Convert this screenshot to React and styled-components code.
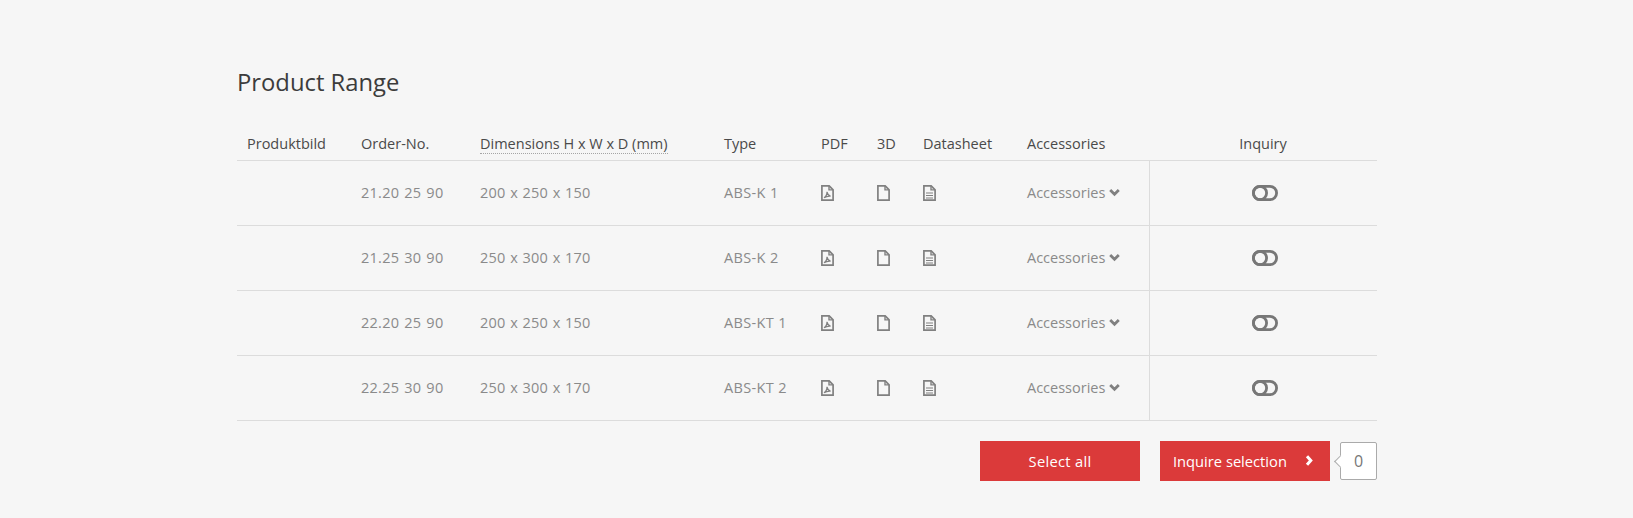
import React from 'react';
import styled, { createGlobalStyle } from 'styled-components';

const GlobalStyle = createGlobalStyle`
  html, body {
    margin: 0;
    padding: 0;
    background: #f6f6f6;
    font-family: "Open Sans", "Noto Sans", sans-serif;
  }
`;

const Page = styled.main`
  width: 1140px;
  margin: 0 0 0 237px;
  padding-top: 66px;
  height: 518px;
  box-sizing: border-box;
  overflow: hidden;
`;

const Title = styled.h2`
  margin: 0 0 29px;
  height: 34px;
  line-height: 32px;
  font-size: 23.8px;
  font-weight: 400;
  color: #3c3c3c;
`;

const Table = styled.table`
  width: 1140px;
  table-layout: fixed;
  border-collapse: collapse;
  font-size: 14.5px;
`;

const HeadCell = styled.th`
  height: 31px;
  padding: 0 0 2px ${(p) => (p.$center ? 0 : 10)}px;
  box-sizing: border-box;
  font-weight: 400;
  color: #4a4a4a;
  text-align: ${(p) => (p.$center ? 'center' : 'left')};
  border-bottom: 1px solid #dcdcdc;
  white-space: nowrap;
`;

const Dotted = styled.span`
  border-bottom: 1px dotted #a5a5a5;
`;

const Cell = styled.td`
  height: 65px;
  padding: 0 0 0 10px;
  box-sizing: border-box;
  color: #8a8a8a;
  border-bottom: 1px solid #dcdcdc;
  white-space: nowrap;
`;

const NumberCell = styled(Cell)`
  letter-spacing: 0.25px;
  word-spacing: ${(p) => (p.$tight ? 0.5 : 1)}px;
`;

const TypeCell = styled(Cell)`
  letter-spacing: 0.35px;
`;

const InquiryCell = styled(Cell)`
  padding: 0 0 0 4px;
  text-align: center;
  border-left: 1px solid #dcdcdc;
`;

const IconWrap = styled.span`
  display: inline-flex;
  vertical-align: middle;
  margin-top: -3px;
`;

const AccessoriesLink = styled.span`
  display: inline-flex;
  align-items: center;
  gap: 4px;
`;

const Actions = styled.div`
  display: flex;
  align-items: center;
  justify-content: flex-end;
  margin-top: 20px;
`;

const RedButton = styled.button`
  display: flex;
  align-items: center;
  justify-content: ${(p) => (p.$between ? 'space-between' : 'center')};
  width: ${(p) => p.$width}px;
  height: 40px;
  padding: 0 ${(p) => (p.$between ? 16 : 13)}px 0 13px;
  margin-right: ${(p) => p.$gap}px;
  box-sizing: border-box;
  border: none;
  background: #db3a3a;
  color: #fff;
  font-family: inherit;
  font-size: 14.7px;
  letter-spacing: ${(p) => (p.$between ? 0 : 0.3)}px;
`;

const Count = styled.div`
  position: relative;
  width: 37px;
  height: 38px;
  box-sizing: border-box;
  display: flex;
  align-items: center;
  justify-content: center;
  background: #fff;
  border: 1px solid #aaa;
  border-radius: 2px;
  color: #777;
  font-size: 16px;

  &::before {
    content: '';
    position: absolute;
    left: -5px;
    top: 14px;
    width: 8px;
    height: 8px;
    background: #fff;
    border-left: 1px solid #aaa;
    border-bottom: 1px solid #aaa;
    transform: rotate(45deg);
  }
`;

const PdfIcon = () => (
  <svg width="13" height="16" viewBox="0 0 13 16" fill="none" stroke="#808080" strokeWidth="1.7">
    <path d="M.9.9h7.3l3.9 3.9v10.3H.9z" />
    <path d="M8 .9v4h4" strokeWidth="1.4" />
    <path d="M3 12.8c2-1.2 3-4 3-6 .4 2.2 1.4 3.6 3.6 4.4-2.4-.2-4.6.3-6.6 1.6z" strokeWidth="1.2" />
  </svg>
);

const FileIcon = () => (
  <svg width="13" height="16" viewBox="0 0 13 16" fill="none" stroke="#808080" strokeWidth="1.7">
    <path d="M.9.9h7.3l3.9 3.9v10.3H.9z" />
    <path d="M8 .9v4h4" strokeWidth="1.4" />
  </svg>
);

const TextFileIcon = () => (
  <svg width="13" height="16" viewBox="0 0 13 16" fill="none" stroke="#808080" strokeWidth="1.7">
    <path d="M.9.9h7.3l3.9 3.9v10.3H.9z" />
    <path d="M8 .9v4h4" strokeWidth="1.4" />
    <path d="M3 8h7M3 10.5h7M3 13h7" strokeWidth="1.2" />
  </svg>
);

const Chevron = () => (
  <svg width="11" height="9" viewBox="0 0 11 9" fill="none" stroke="#808080" strokeWidth="2.8">
    <path d="M1.2 2l4.3 4.3L9.8 2" />
  </svg>
);

const ChevronRight = () => (
  <svg width="9" height="11" viewBox="0 0 9 11" fill="none" stroke="#fff" strokeWidth="3">
    <path d="M2 1.2l3.8 4.3L2 9.8" />
  </svg>
);

const ToggleIcon = () => (
  <svg width="26" height="16" viewBox="0 0 26 16" fill="none" stroke="#777" strokeWidth="2.8">
    <rect x="1.4" y="1.4" width="23.2" height="13.2" rx="6.6" />
    <circle cx="8" cy="8" r="6.6" />
  </svg>
);

const rows = [
  ['21.20 25 90', '200 x 250 x 150', 'ABS-K 1'],
  ['21.25 30 90', '250 x 300 x 170', 'ABS-K 2'],
  ['22.20 25 90', '200 x 250 x 150', 'ABS-KT 1'],
  ['22.25 30 90', '250 x 300 x 170', 'ABS-KT 2'],
];

const colWidths = [114, 119, 244, 97, 56, 46, 104, 132, 228];

const App = () => (
  <Page>
    <GlobalStyle />
    <Title>Product Range</Title>
    <Table>
      <colgroup>
        {colWidths.map((w, i) => (
          <col key={i} width={w} />
        ))}
      </colgroup>
      <thead>
        <tr>
          <HeadCell>Produktbild</HeadCell>
          <HeadCell>Order-No.</HeadCell>
          <HeadCell>
            <Dotted>Dimensions H x W x D (mm)</Dotted>
          </HeadCell>
          <HeadCell>Type</HeadCell>
          <HeadCell>PDF</HeadCell>
          <HeadCell>3D</HeadCell>
          <HeadCell>Datasheet</HeadCell>
          <HeadCell>Accessories</HeadCell>
          <HeadCell $center>Inquiry</HeadCell>
        </tr>
      </thead>
      <tbody>
        {rows.map(([order, dims, type]) => (
          <tr key={order}>
            <Cell />
            <NumberCell>{order}</NumberCell>
            <NumberCell $tight>{dims}</NumberCell>
            <TypeCell>{type}</TypeCell>
            <Cell>
              <IconWrap>
                <PdfIcon />
              </IconWrap>
            </Cell>
            <Cell>
              <IconWrap>
                <FileIcon />
              </IconWrap>
            </Cell>
            <Cell>
              <IconWrap>
                <TextFileIcon />
              </IconWrap>
            </Cell>
            <Cell>
              <AccessoriesLink>
                Accessories <Chevron />
              </AccessoriesLink>
            </Cell>
            <InquiryCell>
              <IconWrap>
                <ToggleIcon />
              </IconWrap>
            </InquiryCell>
          </tr>
        ))}
      </tbody>
    </Table>
    <Actions>
      <RedButton $width={160} $gap={20}>Select all</RedButton>
      <RedButton $width={170} $gap={10} $between>
        Inquire selection <ChevronRight />
      </RedButton>
      <Count>0</Count>
    </Actions>
  </Page>
);

export default App;
